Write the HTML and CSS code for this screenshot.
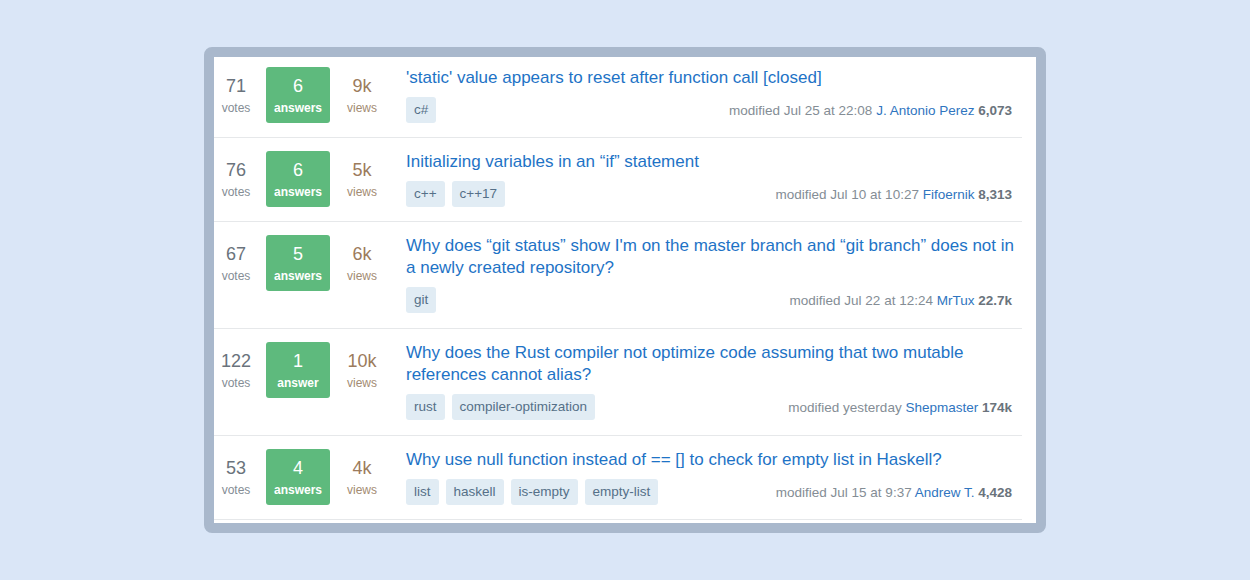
FILE: index.html
```html
<!DOCTYPE html>
<html>
<head>
<meta charset="utf-8">
<link rel="stylesheet" href="styles.css">
</head>
<body>
<div class="frame">
  <div class="list">
    <div class="row first">
      <div class="stat votes"><div class="num">71</div><div class="lbl">votes</div></div>
      <div class="stat answers"><div class="num">6</div><div class="lbl">answers</div></div>
      <div class="stat views"><div class="num">9k</div><div class="lbl">views</div></div>
      <div class="main">
        <a class="title">'static' value appears to reset after function call [closed]</a>
        <div class="meta">
          <div class="tags"><span class="tag">c#</span></div>
          <div class="mod">modified Jul 25 at 22:08 <a class="user">J. Antonio Perez</a> <b>6,073</b></div>
        </div>
      </div>
    </div>
    <div class="row">
      <div class="stat votes"><div class="num">76</div><div class="lbl">votes</div></div>
      <div class="stat answers"><div class="num">6</div><div class="lbl">answers</div></div>
      <div class="stat views"><div class="num">5k</div><div class="lbl">views</div></div>
      <div class="main">
        <a class="title">Initializing variables in an “if” statement</a>
        <div class="meta">
          <div class="tags"><span class="tag">c++</span><span class="tag">c++17</span></div>
          <div class="mod">modified Jul 10 at 10:27 <a class="user">Fifoernik</a> <b>8,313</b></div>
        </div>
      </div>
    </div>
    <div class="row two">
      <div class="stat votes"><div class="num">67</div><div class="lbl">votes</div></div>
      <div class="stat answers"><div class="num">5</div><div class="lbl">answers</div></div>
      <div class="stat views"><div class="num">6k</div><div class="lbl">views</div></div>
      <div class="main">
        <a class="title">Why does “git status” show I'm on the master branch and “git branch” does not in a newly created repository?</a>
        <div class="meta">
          <div class="tags"><span class="tag">git</span></div>
          <div class="mod">modified Jul 22 at 12:24 <a class="user">MrTux</a> <b>22.7k</b></div>
        </div>
      </div>
    </div>
    <div class="row two">
      <div class="stat votes"><div class="num">122</div><div class="lbl">votes</div></div>
      <div class="stat answers"><div class="num">1</div><div class="lbl">answer</div></div>
      <div class="stat views"><div class="num">10k</div><div class="lbl">views</div></div>
      <div class="main">
        <a class="title">Why does the Rust compiler not optimize code assuming that two mutable references cannot alias?</a>
        <div class="meta">
          <div class="tags"><span class="tag">rust</span><span class="tag">compiler-optimization</span></div>
          <div class="mod">modified yesterday <a class="user">Shepmaster</a> <b>174k</b></div>
        </div>
      </div>
    </div>
    <div class="row">
      <div class="stat votes"><div class="num">53</div><div class="lbl">votes</div></div>
      <div class="stat answers"><div class="num">4</div><div class="lbl">answers</div></div>
      <div class="stat views"><div class="num">4k</div><div class="lbl">views</div></div>
      <div class="main">
        <a class="title">Why use null function instead of == [] to check for empty list in Haskell?</a>
        <div class="meta">
          <div class="tags"><span class="tag">list</span><span class="tag">haskell</span><span class="tag">is-empty</span><span class="tag">empty-list</span></div>
          <div class="mod">modified Jul 15 at 9:37 <a class="user">Andrew T.</a> <b>4,428</b></div>
        </div>
      </div>
    </div>
  </div>
</div>
</body>
</html>
```

FILE: styles.css
```css
* { box-sizing: border-box; }
html, body { margin: 0; padding: 0; }
body {
  background: #dae6f7;
  height: 100vh;
  display: flex;
  align-items: center;
  justify-content: center;
  font-family: "Liberation Sans", Arial, sans-serif;
}
.frame {
  width: 842px;
  height: 486px;
  border: 10px solid #a9b8cc;
  border-radius: 8px;
  background: #fff;
  overflow: hidden;
}
.list {
  padding-right: 14px;
}
.row {
  display: flex;
  align-items: flex-start;
  padding: 13px 0 14px;
  border-bottom: 1px solid #e6e8ea;
}
.row.first { padding-top: 10px; }
.row.two { padding-bottom: 15px; }
.stat {
  height: 56px;
  text-align: center;
  padding-top: 7px;
}
.stat .num {
  font-size: 18px;
  line-height: 24px;
}
.stat .lbl {
  font-size: 12px;
  line-height: 16px;
  margin-top: 2px;
}
.votes { width: 44px; color: #6a737c; }
.votes .lbl { color: #848d95; }
.answers {
  width: 64px;
  margin-left: 8px;
  background: #5eba7d;
  color: #fff;
  border-radius: 3px;
}
.answers .lbl { font-weight: bold; }
.views { width: 64px; color: #9c7b5c; }
.views .lbl { color: #a38b73; }
.main {
  flex: 1;
  margin-left: 12px;
}
.title {
  display: block;
  color: #1e73c6;
  font-size: 17px;
  line-height: 22px;
  text-decoration: none;
}
.meta {
  margin-top: 8px;
  padding-right: 10px;
  display: flex;
  justify-content: space-between;
  align-items: center;
}
.tags { display: flex; gap: 7px; }
.tag {
  height: 26px;
  line-height: 26px;
  padding: 0 8px;
  background: #e1ecf4;
  color: #557088;
  font-size: 13.5px;
  border-radius: 3px;
}
.mod {
  font-size: 13.5px;
  color: #848d95;
}
.mod .user { color: #2f75c0; }
.mod b { color: #6a737c; }
```
